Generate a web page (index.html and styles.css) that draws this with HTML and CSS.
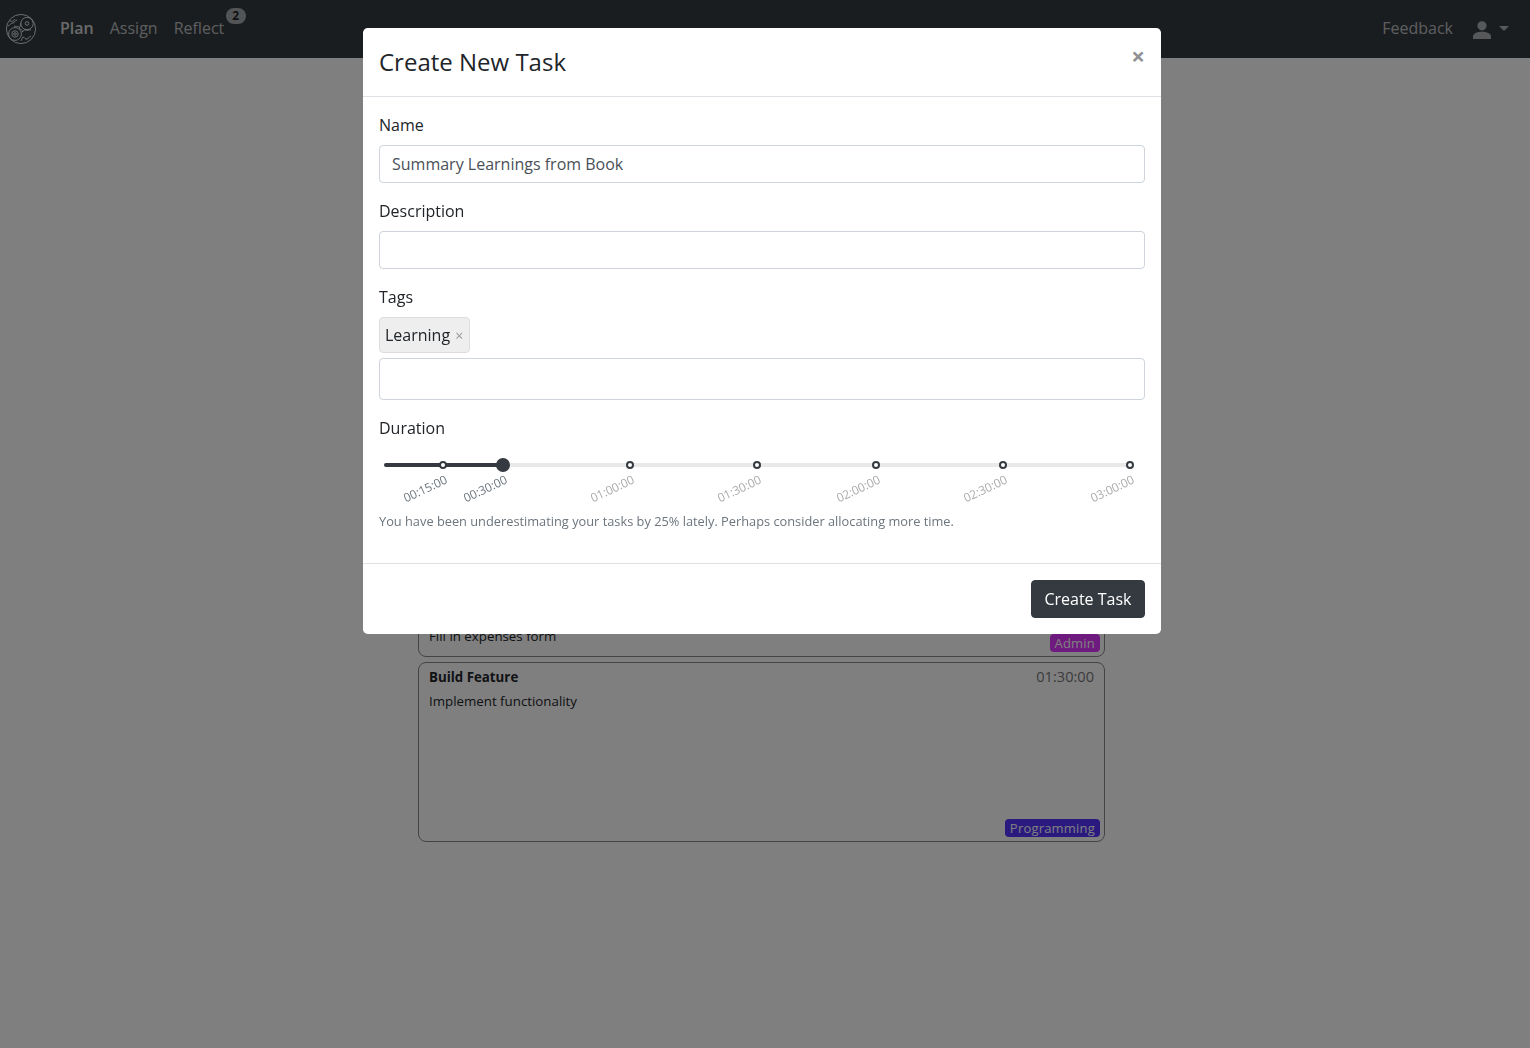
FILE: index.html
```html
<!DOCTYPE html>
<html lang="en">
<head>
<meta charset="utf-8">
<title>Create New Task</title>
<link rel="stylesheet" href="styles.css">
</head>
<body>
<nav class="navbar">
  <svg class="logo" width="32" height="32" viewBox="0 0 32 32" fill="none" stroke="currentColor" stroke-width="1">
    <circle cx="16" cy="16" r="14.6"/>
    <circle cx="22" cy="10.5" r="6.2"/>
    <circle cx="22" cy="10.5" r="1.8"/>
    <circle cx="10" cy="21" r="6.4"/>
    <circle cx="10" cy="21" r="3.2"/>
    <circle cx="10" cy="21" r="1.3"/>
    <path d="M3 13c2-1 3-3 5-3s2-3 4-3M5 8c2 1 4 0 5-2M9 13c2 1 3 0 5 1s1-3 2-4M17 19c2-1 2-3 4-2s3-1 5 0M18 24c2 0 2 3 4 2s2-2 4-3M16 28c1-2 1-3 2-4M14 15c2 2 3 1 4 4"/>
  </svg>
  <a class="nav-link nav-active" href="#">Plan</a>
  <a class="nav-link" href="#">Assign</a>
  <a class="nav-link nav-badged" href="#">Reflect<span class="nav-badge">2</span></a>
  <span class="nav-spacer"></span>
  <a class="nav-link" href="#">Feedback</a>
  <span class="user-menu">
    <svg width="18" height="18" viewBox="0 0 18 18" fill="currentColor"><circle cx="9" cy="4.8" r="4.6"/><path d="M0 18v-2.2C0 12.6 4 10.8 9 10.8s9 1.8 9 5V18z"/></svg>
    <span class="caret"></span>
  </span>
</nav>

<main class="task-list">
  <article class="task task-short">
    <p class="task-desc">Fill in expenses form</p>
    <span class="tag tag-admin">Admin</span>
  </article>
  <article class="task task-tall">
    <div class="task-head"><strong class="task-title">Build Feature</strong><span class="task-time">01:30:00</span></div>
    <p class="task-desc">Implement functionality</p>
    <span class="tag tag-prog">Programming</span>
  </article>
</main>

<div class="backdrop"></div>

<section class="modal">
  <header class="modal-header">
    <h4 class="modal-title">Create New Task</h4>
    <span class="modal-close">×</span>
  </header>
  <form class="modal-body">
    <div class="form-group">
      <label class="form-label">Name</label>
      <input class="form-input" type="text" value="Summary Learnings from Book">
    </div>
    <div class="form-group">
      <label class="form-label">Description</label>
      <input class="form-input" type="text">
    </div>
    <div class="form-group">
      <label class="form-label">Tags</label>
      <div class="chips"><span class="chip">Learning<span class="chip-x">×</span></span></div>
      <input class="form-input form-input-tall" type="text">
    </div>
    <div class="form-group">
      <label class="form-label">Duration</label>
      <div class="slider">
        <div class="track"></div>
        <div class="track-fill"></div>
        <span class="dot" style="left:59px"></span>
        <span class="handle" style="left:119px"></span>
        <span class="dot" style="left:246px"></span>
        <span class="dot" style="left:373px"></span>
        <span class="dot" style="left:492px"></span>
        <span class="dot" style="left:619px"></span>
        <span class="dot" style="left:746px"></span>
        <span class="mark mark-on" style="left:23px">00:15:00</span>
        <span class="mark mark-on" style="left:83px">00:30:00</span>
        <span class="mark" style="left:210px">01:00:00</span>
        <span class="mark" style="left:337px">01:30:00</span>
        <span class="mark" style="left:456px">02:00:00</span>
        <span class="mark" style="left:583px">02:30:00</span>
        <span class="mark" style="left:710px">03:00:00</span>
      </div>
      <small class="hint">You have been underestimating your tasks by 25% lately. Perhaps consider allocating more time.</small>
    </div>
  </form>
  <footer class="modal-footer">
    <button class="btn" type="button">Create Task</button>
  </footer>
</section>
</body>
</html>
```
FILE: styles.css
```css
* { box-sizing: border-box; }
html, body { margin: 0; height: 100%; }
body {
  font-family: "Open Sans", sans-serif;
  font-size: 16px;
  line-height: 1.5;
  color: #212529;
  background: #fff;
  overflow: hidden;
}
.navbar {
  height: 58px;
  background: #343a40;
  display: flex;
  align-items: center;
  padding: 0 21px 0 5px;
  color: rgba(255,255,255,.6);
}
.logo { margin-right: 15px; flex: none; color: rgba(255,255,255,.8); }
.nav-link {
  color: rgba(255,255,255,.68);
  text-decoration: none;
  padding: 0 8px 2px;
}
.nav-active { color: rgba(255,255,255,.8); font-weight: 600; }
.nav-badged { position: relative; }
.nav-badge {
  position: absolute;
  left: 60px;
  top: -8px;
  width: 20px;
  height: 16px;
  border-radius: 8px;
  background: #a6a8aa;
  color: #212529;
  font-size: 12px;
  font-weight: 700;
  line-height: 16px;
  text-align: center;
}
.nav-spacer { flex: 1; }
.user-menu { display: flex; align-items: center; margin-left: 12px; padding-top: 2px; }
.caret {
  width: 0;
  height: 0;
  margin: -4px 0 0 8px;
  border-left: 5px solid transparent;
  border-right: 5px solid transparent;
  border-top: 5px solid currentColor;
}
.task-list {
  width: 687px;
  margin: 539px 0 0 418px;
  display: flex;
  flex-direction: column;
  gap: 5px;
}
.task {
  position: relative;
  border: 1px solid #888;
  border-radius: 8px;
  padding: 2px 10px;
}
.task-short { height: 60px; padding-top: 28px; }
.task-tall { height: 180px; }
.task-head { display: flex; justify-content: space-between; align-items: flex-start; }
.task-title { font-size: 13.3px; font-weight: 700; line-height: 24px; }
.task-time { font-size: 14.6px; color: #777; line-height: 22px; }
.task-desc { margin: 0; font-size: 13.3px; line-height: 20px; padding-top: 2px; }
.task-short .task-desc { padding-top: 0; }
.tag {
  position: absolute;
  right: 4px;
  bottom: 4px;
  height: 18px;
  padding: 0 5px;
  border-radius: 4px;
  color: #fff;
  font-size: 13px;
  line-height: 18px;
  letter-spacing: .2px;
}
.tag-admin { background: #de34ff; }
.tag-prog { background: #5434ff; }
.backdrop {
  position: fixed;
  inset: 0;
  background: rgba(0,0,0,.5);
}
.modal {
  position: fixed;
  left: 363px;
  top: 28px;
  width: 798px;
  background: #fff;
  border-radius: 4.8px;
  display: flex;
  flex-direction: column;
}
.modal-header {
  height: 69px;
  padding: 16px;
  border-bottom: 1px solid #dee2e6;
  display: flex;
  justify-content: space-between;
  align-items: flex-start;
}
.modal-title { margin: 0; font-size: 24px; font-weight: 400; line-height: 36px; }
.modal-close {
  font-size: 24px;
  font-weight: 700;
  line-height: 24px;
  color: #212529;
  opacity: .5;
}
.modal-body { padding: 16px 16px 0; height: 466px; }
.form-group { margin-bottom: 16px; }
.form-label { display: block; margin-bottom: 8px; }
.form-input {
  display: block;
  width: 100%;
  height: 38px;
  padding: 6px 12px;
  border: 1px solid #ced4da;
  border-radius: 4px;
  font: inherit;
  color: #495057;
  background: #fff;
  outline: none;
}
.form-input-tall { height: 42px; }
.chips { display: flex; margin-bottom: 5px; }
.chip {
  height: 36px;
  padding: 0 6px 0 5px;
  display: flex;
  align-items: center;
  background: #eee;
  border: 1px solid #ddd;
  border-radius: 4px;
}
.chip-x { margin-left: 5px; color: #999; font-size: 14px; }
.slider { position: relative; height: 72px; margin-top: 9px; }
.track, .track-fill {
  position: absolute;
  top: 14px;
  left: 5px;
  height: 4px;
  border-radius: 2px;
}
.track { width: 747px; background: #e9e9e9; }
.track-fill { width: 119px; background: #343a40; }
.dot {
  position: absolute;
  top: 12px;
  width: 8px;
  height: 8px;
  margin-left: 1px;
  background: #fff;
  border: 2px solid #343a40;
  border-radius: 50%;
}
.handle {
  position: absolute;
  top: 9px;
  width: 14px;
  height: 14px;
  margin-left: -2px;
  background: #343a40;
  border-radius: 50%;
}
.mark {
  position: absolute;
  top: 32px;
  font-size: 12px;
  line-height: 16px;
  letter-spacing: -.1px;
  color: #aaa;
  transform: rotate(-25deg);
  transform-origin: center;
  white-space: nowrap;
}
.mark-on { color: #6c757d; }
.hint { display: block; margin-top: -9px; font-size: 12.8px; line-height: 19px; color: #6c757d; }
.modal-footer {
  height: 71px;
  padding: 16px;
  border-top: 1px solid #dee2e6;
  display: flex;
  justify-content: flex-end;
}
.btn {
  height: 38px;
  padding: 6px 12.5px;
  background: #343a40;
  border: 1px solid #343a40;
  border-radius: 4px;
  color: #fff;
  font: inherit;
}
```
